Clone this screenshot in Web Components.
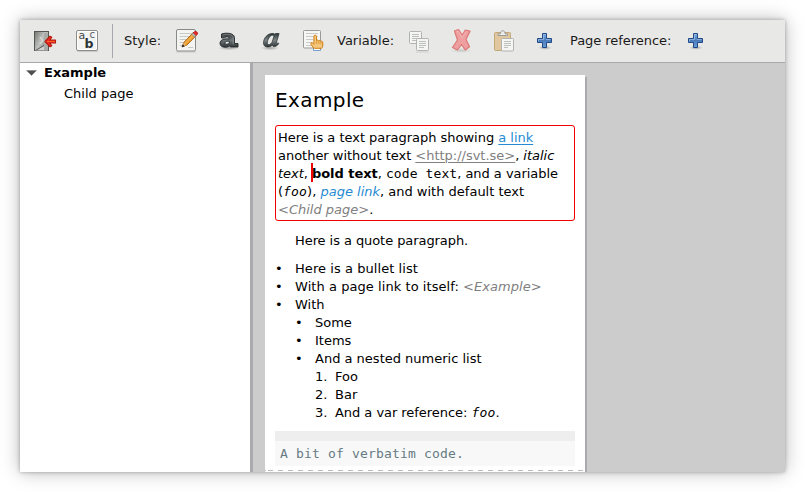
<!DOCTYPE html>
<html lang="en">
<head>
<meta charset="utf-8">
<title>Example</title>
<style>
html, body { margin: 0; height: 100%; background: #fff; overflow: hidden; }
body { font: 13px/18px "DejaVu Sans", sans-serif; color: #000; }
</style>
</head>
<body>
<doc-editor></doc-editor>
<script>
const define = (name, html) => customElements.define(name, class extends HTMLElement {
  constructor() {
    super();
    this.attachShadow({ mode: 'open' }).innerHTML = html;
  }
});

const plus = `<svg viewBox="0 0 24 24"><defs><linearGradient id="g" x2="0" y2="1"><stop stop-color="#82aee0"/><stop offset=".5" stop-color="#4a7bbb"/><stop offset="1" stop-color="#6b9bd2"/></linearGradient><radialGradient id="s"><stop stop-color="#000" stop-opacity=".3"/><stop offset="1" stop-opacity="0"/></radialGradient></defs>
<ellipse cx="12" cy="18.700" rx="7" ry="2.200" fill="url(#s)"/>
<path d="M9.500 4.500h4v5h5v4h-5v5h-4v-5h-5v-4h5z" fill="url(#g)" stroke="#204a87" stroke-linejoin="round"/>
<path d="M10.500 10.500v-5h2M5.500 12.500v-2h5M13 10.500h4.500" fill="none" stroke="#a8c6ea" stroke-width=".8" opacity=".8"/></svg>`;

const sheet = (x, y, w, h) => `<rect x="${x}" y="${y}" width="${w}" height="${h}" rx="1" fill="#f5f5f4" stroke="#b1b3af"/>`;

const icons = {
  exit: `<svg viewBox="0 0 24 24"><defs><linearGradient id="d" x2="1" y2="1"><stop stop-color="#777974"/><stop offset=".55" stop-color="#c0c1be"/><stop offset="1" stop-color="#8a8c87"/></linearGradient><linearGradient id="e" x2="0" y2="1"><stop stop-color="#55574f"/><stop offset="1" stop-color="#c5c6c3"/></linearGradient></defs>
<rect x="1.500" y="2.500" width="14" height="19" fill="url(#e)" stroke="#555753"/>
<path d="M2 3h9v14.500L2 22z" fill="url(#d)"/><path d="M2.500 21.500L11 17V3h4v18.500z" fill="#d2d3d0"/><path d="M11 3.500h4V21h-4z" fill="#a9aba7"/><path d="M2.500 21.500L11 16.500" stroke="#555753"/><path d="M7 8l3 3.500L7 15" stroke="#d6d8d3" stroke-width="1.500" fill="none"/>
<path d="M12 12.500l5-5.300 1.800 1-2 2.800h5.700v3h-5.700l2 2.800-1.800 1z" fill="#ef2929" stroke="#b31a0c" stroke-width="1.100" stroke-linejoin="round"/><path d="M14 12.500h8" stroke="#f5641a" stroke-width="1"/></svg>`,
  abc: `<svg viewBox="0 0 24 24"><rect x="2" y="21" width="21" height="2" rx="1" opacity=".13"/><rect x="1.500" y="1.500" width="21" height="20" rx="1.500" fill="#f3f3f2" stroke="#8b8d89"/><rect x="2.500" y="2.500" width="19" height="18" rx="1" fill="none" stroke="#fff"/>
<g font-family="DejaVu Sans" fill="#454a4c"><text x="3.500" y="9.500" font-size="11">a</text><text x="14.500" y="8.500" font-size="10" fill="#5c6264">c</text><text x="9.500" y="18.500" font-size="12.500" font-weight="bold" fill="#2e3436">b</text></g></svg>`,
  edit: `<svg viewBox="0 0 24 24"><defs><linearGradient id="p" x2="1" y2="1"><stop stop-color="#fcc76b"/><stop offset="1" stop-color="#e58a12"/></linearGradient></defs><path d="M1 23h20" stroke="#000" opacity=".12"/><rect x="1.500" y=".5" width="19" height="21.500" rx="1.500" fill="#f4f5f2" stroke="#888a85"/><path d="M4.500 4.500h12M4.500 7.500h11M4.500 10.500h7M4.500 13.500h4M4.500 16.500h3M13 18.500h5" stroke="#c7c9c4"/>
<path d="M7.300 17.700l1.800-4.400 8.700-9.300 3 2.900-9 9.200z" fill="url(#p)" stroke="#a85f09"/><path d="M18 4l1.700-1.300c1.300-1 3.500 1 2.500 2.500L20.600 7z" fill="#ef2929" stroke="#b71515"/><path d="M16.700 5.200l1.300-1.300 2.800 2.800-1.300 1.300z" fill="#bcc0bd" stroke="#7c7f7a" stroke-width=".6"/><path d="M7.300 17.700l1.400-3.400 2.200 2z" fill="#ecc48a"/><path d="M7 18l.8-2.300 1.500 1.400z" fill="#222" stroke="#222" stroke-width=".6"/></svg>`,
  bold: `<svg viewBox="0 0 24 24"><defs><linearGradient id="b" x2="0" y2="1"><stop stop-color="#2e3436"/><stop offset=".5" stop-color="#70777a"/><stop offset="1" stop-color="#2e3436"/></linearGradient><radialGradient id="s"><stop stop-opacity=".3"/><stop offset="1" stop-opacity="0"/></radialGradient></defs><ellipse cx="12" cy="19" rx="11" ry="2.300" fill="url(#s)"/>
<path fill-rule="evenodd" d="M4.500 9V5C8 3.700 17 3.400 17.500 8.500v6h3.500V18h-7.500l-.8-1C9.500 19.200 3 18.600 3 14.300c0-4 5.500-4.800 9.300-4.300C12.300 7 8 7.800 7.500 9zM12.300 12.300c-2-.2-4.500 0-4.500 1.700s3.300 1.400 4.500.2z" fill="url(#b)" stroke="#24292b" stroke-width=".9"/><path d="M5.500 6c4-1.300 10.500-1 10.700 2.500v7" fill="none" stroke="#a3a9ab" stroke-width=".7" opacity=".8"/></svg>`,
  italic: `<svg viewBox="0 0 24 24"><defs><linearGradient id="i" x2="0" y2="1"><stop stop-color="#30373a"/><stop offset=".5" stop-color="#7d8587"/><stop offset="1" stop-color="#2e3436"/></linearGradient><radialGradient id="s"><stop stop-opacity=".3"/><stop offset="1" stop-opacity="0"/></radialGradient></defs><ellipse cx="11" cy="19" rx="9" ry="2.300" fill="url(#s)"/>
<path fill-rule="evenodd" d="M13 4.500c1.600-.2 2.500.2 3 .9l.5-.9h3.600l-3 10.100c.5.300 1.300-.2 2-.9l.6 1c-2 3.200-6 3.800-6.300 1.200-2.700 3-8.900 3-8.900-1.800C4.500 9 8.500 4.700 13 4.500zm.7 1.700C11 6 8.300 10.800 8.300 14c0 3.300 4.200 1.300 5-1.500L15 7c-.2-.5-.7-.8-1.300-.8z" fill="url(#i)" stroke="#24292b" stroke-width=".7"/></svg>`,
  pick: `<svg viewBox="0 0 24 24"><rect x="2.500" y="1.500" width="17" height="17.500" rx="1" fill="#f6f7f4" stroke="#999b96"/><path d="M5 4.500h12M5 7.500h12M5 10.500h7M5 13.500h5M5 16.500h5" stroke="#c9cbc7"/>
<path d="M12.500 18v3.500h7V18z" fill="#fff" stroke="#729fcf"/><path d="M12 18.500l-2-3.300c-.7-1.700 1-2.300 2.200-.7l.7.800V7.500c0-1.800 2.600-1.800 2.600 0v4c.9-.8 2-.5 2.200.3.900-.5 1.800-.2 2 .5 1-.4 2.100.2 2.100 1.200v2.500c0 1.600-.6 2.500-1.200 3.300h-7.200z" fill="#f5c77d" stroke="#ce7f13"/><path d="M15.700 12v3M17.900 12v3M20 12.500v2.700" stroke="#d68a23" stroke-width=".8"/></svg>`,
  copy: `<svg viewBox="0 0 24 24"><path d="M9 23h13" stroke="#000" opacity=".1"/>${sheet(2.5, 2.5, 12, 12)}<path d="M5 5.500h7M5 7.500h7M5 9.500h7M5 11.500h5" stroke="#bdbfbc"/>${sheet(9.5, 9.5, 12, 12)}<path d="M12 12.500h7M12 14.500h7M12 16.500h7M12 18.500h5" stroke="#bdbfbc"/></svg>`,
  remove: `<svg viewBox="0 0 24 24"><defs><radialGradient id="s"><stop stop-opacity=".14"/><stop offset="1" stop-opacity="0"/></radialGradient></defs><ellipse cx="12" cy="21.500" rx="11" ry="2.500" fill="url(#s)"/><path d="M5.500 2l4-1.500L13.300 6l3-5 4.700 1.200-4 8.300 3.500 7.300-4.300 3.200-3.700-5.500-4 5.500-5-2.500 5-7.500z" fill="#ee9f9f" stroke="#dc7878" stroke-width="1.200" stroke-linejoin="round"/><path d="M7 3l2.200-.8 4 6.300 3.700-6" fill="none" stroke="#f4bdbd" stroke-width=".7"/></svg>`,
  paste: `<svg viewBox="0 0 24 24"><rect x="3.500" y="3.500" width="16" height="18" rx="1" fill="#e0c79f" stroke="#c3a878"/><path d="M7 5.500V4.800h2.500C9.500.700 14 .700 14 4.800h2.500v1.700H7z" fill="#eeeeec" stroke="#999b97"/>${sheet(10.5, 9.5, 12, 12.5)}<path d="M13 12.500h7M13 14.500h7M13 16.500h7M13 18.500h4" stroke="#bdbfbc"/></svg>`,
  plus
};

customElements.define('tool-icon', class extends HTMLElement {
  constructor() {
    super();
    this.attachShadow({ mode: 'open' }).innerHTML = `<style>:host{display:block;flex:none;width:24px;height:24px}svg{display:block;width:24px;height:24px;overflow:visible}</style>${icons[this.getAttribute('name')] || ''}`;
  }
});

define('tool-bar', `<style>
:host{display:flex;align-items:center;box-sizing:border-box;height:43px;padding:0 0 1px 13px;background:#e8e8e6;border-bottom:1px solid #a8a8ac}
</style><slot></slot>`);

define('page-tree', `<style>
:host{display:block;width:230px;flex:none;background:#fff}
.row{display:flex;align-items:center;height:21px;box-sizing:border-box}
.root{height:20px;font-weight:bold;padding-left:6px;gap:7px}.child{padding-left:44px}
svg{width:11px;height:6px}
</style><div class="row root"><svg viewBox="0 0 11 6"><path d="M.5.500h10L5.500 5.500z" fill="#4d4f4b" stroke="#777" stroke-width=".5"/></svg><slot name="root"></slot></div><div class="row child"><slot></slot></div>`);

define('doc-item', `<style>
:host{display:flex}
.m{flex:none;width:20px}
</style><span class="m"><slot name="mark">•</slot></span><span><slot></slot></span>`);

define('doc-page', `<style>
:host{display:block;box-sizing:border-box;width:320px;height:397px;padding:0 10px;background:#fff;box-shadow:2px 2px 0 #aaaaae}
h1{font-size:20px;font-weight:normal;line-height:24px;margin:0;padding-top:13px;letter-spacing:.4px}
p{margin:0}
.active{box-sizing:border-box;height:96px;margin-top:13px;border:1px solid #f00000;border-radius:3px;padding:3px 2px 0;white-space:nowrap}
.line{display:block;height:18px;letter-spacing:-.02px}
.line.tight{letter-spacing:-.04px}
.tight code{letter-spacing:.1px}
.line.last{letter-spacing:0}
.link{color:#268bd2}u{text-underline-offset:2px;text-decoration-thickness:1px}
.gray{color:#808080}
.caret{position:relative}
.caret::before{content:"";position:absolute;left:-1px;top:-3px;width:2px;height:19px;background:#f00000}
code{font-family:"DejaVu Sans Mono",monospace;font-size:13px;line-height:1;letter-spacing:.17px}
.quote{margin:11px 0 10px 20px;letter-spacing:-.07px}
.n1{margin-left:20px}.n2{margin-left:40px}
.wide{letter-spacing:.06px}
.verb{margin-top:9px;height:35px;box-sizing:border-box;border-top:10px solid #eee;background:#f8f8f8;color:#657b83;padding:4px 5px 0;line-height:18px}
.verb code{display:block;line-height:18px}
.cut{height:1px;margin:4px -10px 0;background:linear-gradient(#bbb,#bbb) 0 0/1px 1px no-repeat,repeating-linear-gradient(90deg,#fff 0 3px,#bbb 3px 8px,#fff 8px 10px)}
</style>
<h1>Example</h1>
<p class="active"><span class="line">Here is a text paragraph showing <u class="link">a link</u></span><span class="line">another without text <u class="gray">&lt;http://svt.se&gt;</u>, <i>italic</i></span><span class="line tight"><i>text</i>, <b class="caret">bold text</b>, <code>code text</code>, and a variable</span><span class="line last">(<code><i>foo</i></code>), <i class="link">page link</i>, and with default text</span><span class="line last"><i class="gray">&lt;Child page&gt;</i>.</span></p>
<p class="quote">Here is a quote paragraph.</p>
<doc-item class="wide">Here is a bullet list</doc-item>
<doc-item class="wide">With a page link to itself: <i class="gray">&lt;Example&gt;</i></doc-item>
<doc-item>With</doc-item>
<doc-item class="n1">Some</doc-item>
<doc-item class="n1">Items</doc-item>
<doc-item class="n1">And a nested numeric list</doc-item>
<doc-item class="n2"><span slot="mark">1.</span>Foo</doc-item>
<doc-item class="n2"><span slot="mark">2.</span>Bar</doc-item>
<doc-item class="n2" style="letter-spacing:-.04px"><span slot="mark">3.</span>And a var reference: <code><i>foo</i></code>.</doc-item>
<div class="verb"><code>A bit of verbatim code.</code></div>
<div class="cut"></div>`);

define('doc-editor', `<style>
:host{display:flex;flex-direction:column;width:765px;height:452px;margin:20px;background:#ccc;box-shadow:0 0 4px rgba(0,0,0,.3),0 0 18px rgba(0,0,0,.27)}
.body{display:flex;flex:1;min-height:0;overflow:hidden}
.split{width:3px;flex:none;background:#aaaaae}
.canvas{flex:1;padding:12px 0 0 12px}
.sep{width:1px;height:34px;background:#a8a8ac;margin:0 11px 0 13px}
.label{flex:none;white-space:nowrap;color:#1a1a1a}
</style>
<tool-bar>
<tool-icon name="exit"></tool-icon><tool-icon name="abc" style="margin-left:18px"></tool-icon><span class="sep"></span>
<span class="label" style="width:51px">Style:</span>
<tool-icon name="edit"></tool-icon><tool-icon name="bold" style="margin-left:18px"></tool-icon><tool-icon name="italic" style="margin-left:18px"></tool-icon><tool-icon name="pick" style="margin-left:18px"></tool-icon>
<span class="label" style="width:70px;margin-left:12px">Variable:</span>
<tool-icon name="copy"></tool-icon><tool-icon name="remove" style="margin-left:18px"></tool-icon><tool-icon name="paste" style="margin-left:18px"></tool-icon><tool-icon name="plus" style="margin-left:18px"></tool-icon>
<span class="label" style="width:114px;margin-left:13px;letter-spacing:-.05px">Page reference:</span>
<tool-icon name="plus"></tool-icon>
</tool-bar>
<div class="body">
<page-tree><span slot="root">Example</span>Child page</page-tree>
<div class="split"></div>
<div class="canvas"><doc-page></doc-page></div>
</div>`);
</script>
</body>
</html>
